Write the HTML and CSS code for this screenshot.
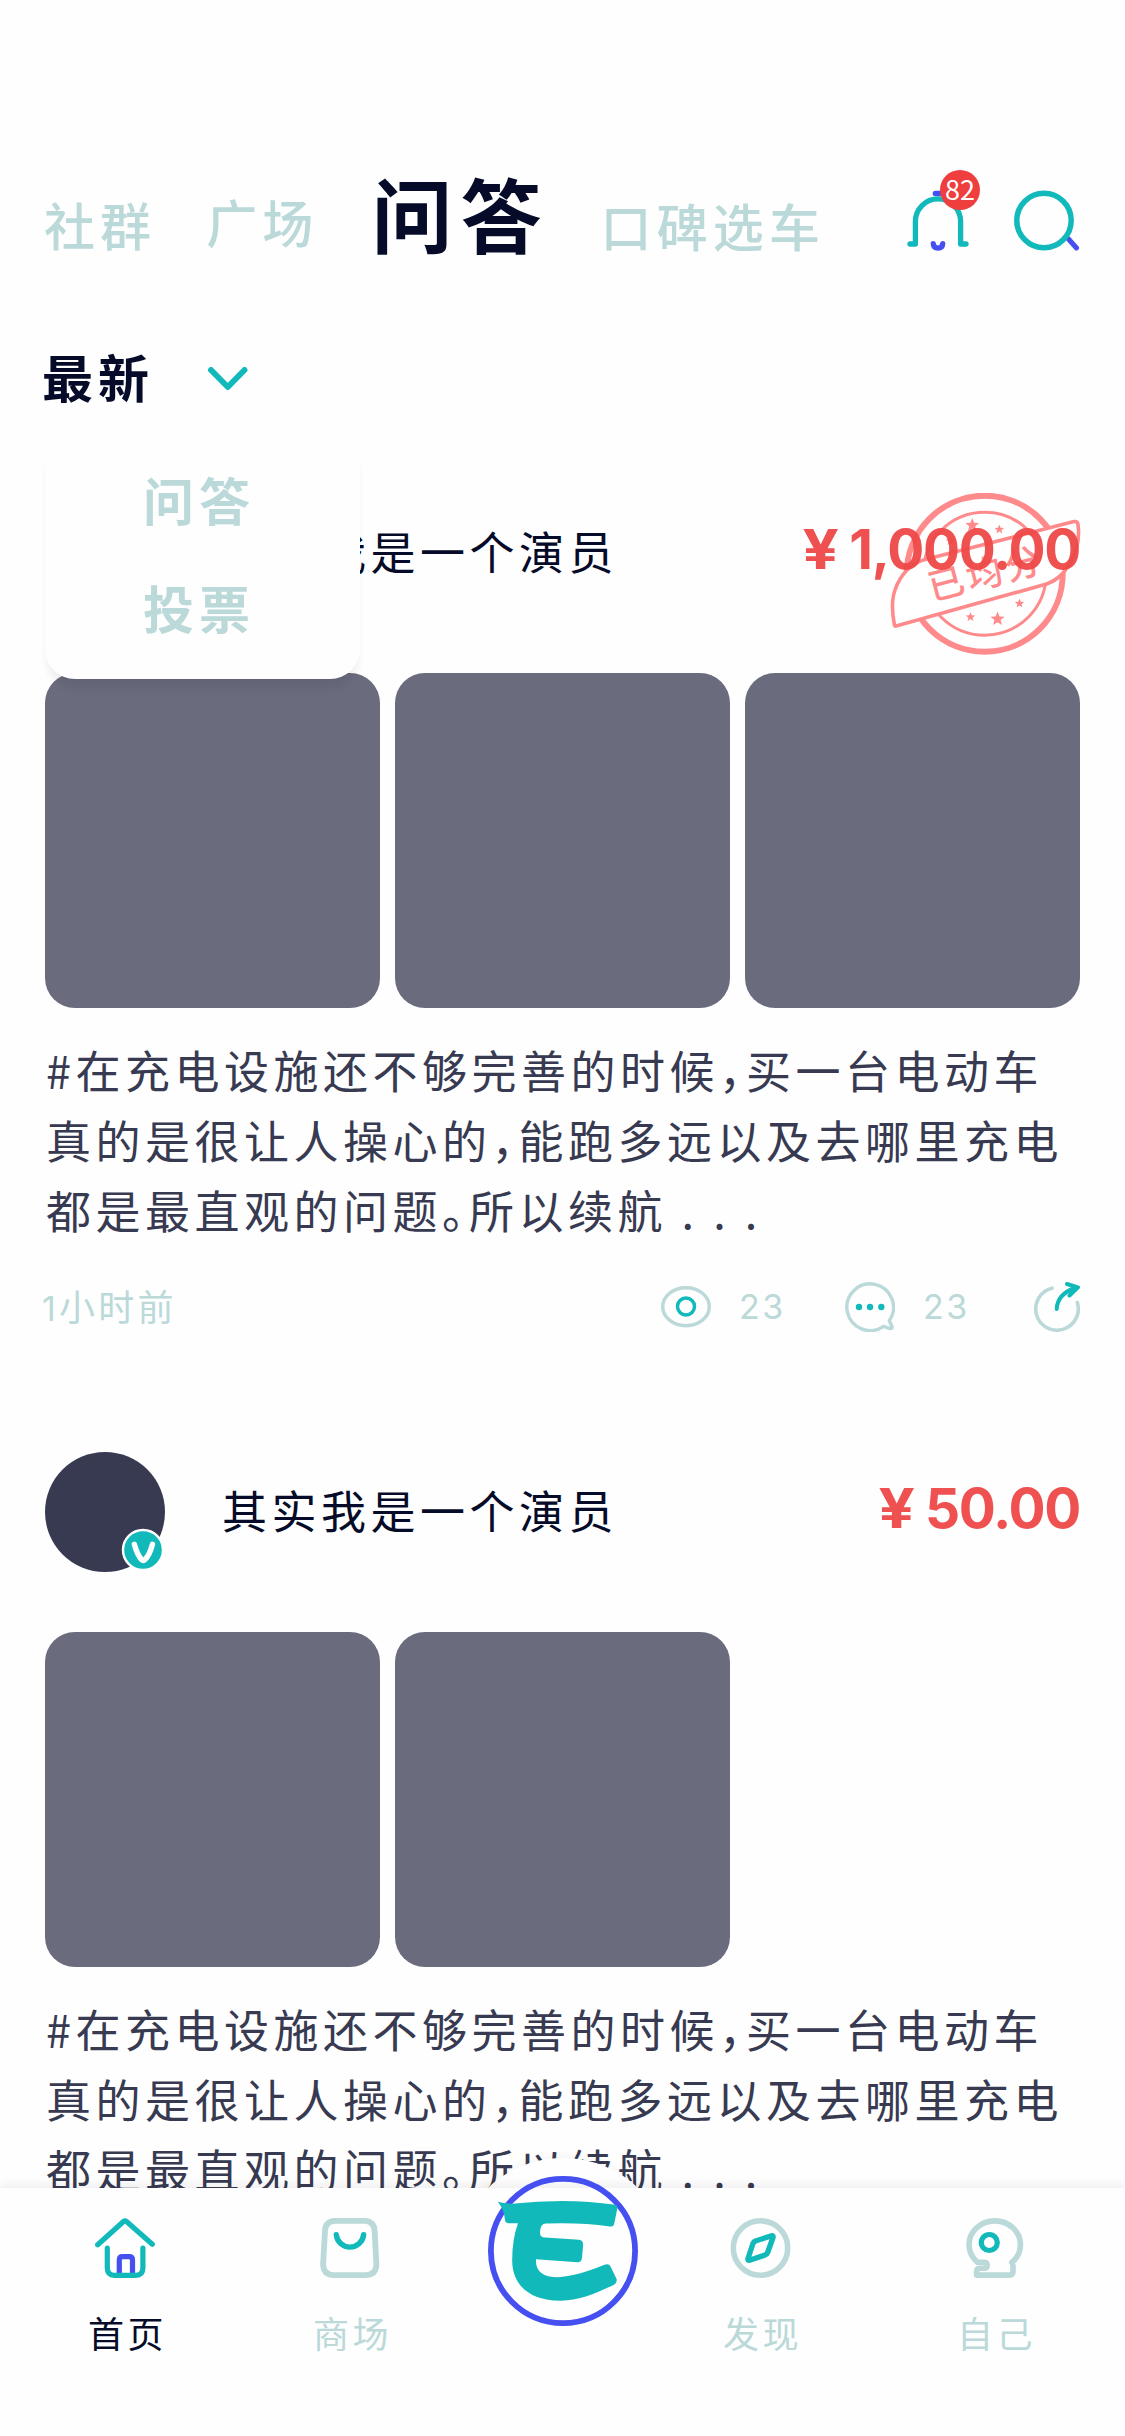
FILE: index.html
```html
<!DOCTYPE html>
<html lang="zh-CN">
<head>
<meta charset="utf-8">
<title>问答</title>
<link rel="stylesheet" href="styles.css">
</head>
<body>
<svg class="defs" width="0" height="0" aria-hidden="true">
  <symbol id="star" viewBox="-10 -10 20 20"><path d="M0-10 2.6-3.4 9.5-3.1 4.1 1.3 5.9 8.1 0 4.2-5.9 8.1-4.1 1.3-9.5-3.1-2.6-3.4z"/></symbol>
</svg>
<div class="screen">
  <header class="header">
    <nav class="tabs">
      <a class="tab tab-community">社群</a>
      <a class="tab tab-square">广场</a>
      <a class="tab tab-active">问答</a>
      <a class="tab tab-reviews">口碑选车</a>
    </nav>
    <div class="actions">
      <div class="bell">
        <svg width="62" height="68" viewBox="0 0 62 68" fill="none" stroke-width="5.3" stroke-linecap="round" stroke-linejoin="round">
          <path stroke="#4650f0" d="M28.300 8.500H37"/>
          <path stroke="#12b9bb" d="M3 59H8.400V36.500A22.600 22.600 0 0 1 53.600 36.500V59H59"/>
          <path stroke="#4650f0" d="M26.300 58.600Q26.500 63 31 63.100Q35.500 63 35.700 58.600"/>
        </svg>
        <span class="count">82</span>
      </div>
      <svg class="search" width="66" height="62" viewBox="0 0 66 62" fill="none" stroke-linecap="round">
        <path stroke="#4650f0" stroke-width="5" d="M54.500 49 62.500 58"/>
        <circle cx="30" cy="30.500" r="27.200" stroke="#12b9bb" stroke-width="5.500"/>
      </svg>
    </div>
  </header>

  <section class="filter">
    <span class="filter-label">最新</span>
    <svg class="chevron" width="40" height="24" viewBox="0 0 40 24" fill="none" stroke="#12b9bb" stroke-width="5.900" stroke-linecap="round" stroke-linejoin="round"><path d="M3 3 19.800 20 36.500 3"/></svg>
    <div class="menu">
      <a>问答</a>
      <a>投票</a>
    </div>
  </section>

  <main class="list">
    <article class="card">
      <div class="card-head">
        <div class="avatar"></div>
        <h2 class="name">其实我是一个演员</h2>
        <svg class="stamp" width="192" height="162" viewBox="0 0 192 162" fill="none" stroke="#ff8a8c">
          <circle cx="94.700" cy="80.700" r="78" stroke-width="6"/>
          <circle cx="94.700" cy="80.700" r="61.500" stroke-width="3"/>
          <path fill="#fff" stroke-width="3.600" stroke-linejoin="round" d="M4.500 132.500C2.500 122 1 108 5 97C10 82 21 69.500 37 66L184 28.600Q187.300 28 187.900 31C190 44 188 56 180 70C174 81 165 89 153 92L7 132.800Q5 133.500 4.500 132.500z"/>
          <g fill="#ff8a8c" stroke="none">
            <use href="#star" x="75" y="25" width="14.500" height="14.500"/>
            <use href="#star" x="104.300" y="31.500" width="10" height="10"/>
            <use href="#star" x="55.500" y="43" width="10" height="10"/>
            <use href="#star" x="75.500" y="119" width="10" height="10"/>
            <use href="#star" x="100" y="118.500" width="15" height="15"/>
            <use href="#star" x="124.500" y="105.500" width="10" height="10"/>
            <text class="stamp-text" transform="translate(42 108) rotate(-14.700)">已均分</text>
          </g>
        </svg>
        <div class="price"><span class="yen">¥</span>1,000.00</div>
      </div>
      <div class="photos"><div class="photo"></div><div class="photo"></div><div class="photo"></div></div>
      <p class="text">#在充电设施还不够完善的时候，买一台电动车<br>真的是很让人操心的，能跑多远以及去哪里充电<br>都是最直观的问题。所以续航 . . .</p>
      <footer class="meta">
        <span class="time"><span class="time-value">1</span>小时前</span>
        <svg class="eye" width="50" height="42" viewBox="0 0 50 42" fill="none"><ellipse cx="25" cy="20.700" rx="23.300" ry="19" stroke="#bad9d8" stroke-width="3.400"/><circle cx="25" cy="20.500" r="8.500" stroke="#12b9bb" stroke-width="3.500"/></svg>
        <span class="num">23</span>
        <svg class="comment" width="50" height="50" viewBox="0 0 50 50" fill="none"><path stroke="#bad9d8" stroke-width="3.400" stroke-linejoin="round" d="M38.500 44.300A23.300 23.300 0 1 1 44.300 38.500Q45.500 41.500 47 44.500Q47.500 47 45 46.500Q42 46 38.500 44.300z"/><g fill="#12b9bb"><circle cx="14" cy="25" r="3.200"/><circle cx="25" cy="25" r="3.200"/><circle cx="36.300" cy="25" r="3.200"/></g></svg>
        <span class="num">23</span>
        <svg class="share" width="46" height="50" viewBox="0 0 46 50" fill="none" stroke-linecap="round" stroke-linejoin="round"><path stroke="#bad9d8" stroke-width="3.600" d="M18 6.200A21.300 21.300 0 1 0 43.300 20.500"/><path stroke="#12b9bb" stroke-width="4" d="M22.700 27Q23.500 12 41 6M33 2 44 5.300 35.500 13.500"/></svg>
      </footer>
    </article>

    <article class="card">
      <div class="card-head">
        <div class="avatar">
          <svg class="verified" width="44" height="44" viewBox="0 0 44 44"><circle cx="22" cy="22" r="20" fill="#12b9bb" stroke="#fff" stroke-width="2.400"/><path fill="none" stroke="#fff" stroke-width="5.400" stroke-linecap="round" stroke-linejoin="round" d="M13.300 16.300Q16.500 27.500 20.500 31.500Q22.300 33.200 24 31.500Q28.500 27.500 31.500 16.300"/></svg>
        </div>
        <h2 class="name">其实我是一个演员</h2>
        <div class="price"><span class="yen">¥</span>50.00</div>
      </div>
      <div class="photos"><div class="photo"></div><div class="photo"></div></div>
      <p class="text">#在充电设施还不够完善的时候，买一台电动车<br>真的是很让人操心的，能跑多远以及去哪里充电<br>都是最直观的问题。所以续航 . . .</p>
    </article>
  </main>

  <nav class="bottom">
    <div class="bump"></div>
    <div class="bar">
      <a class="item item-home active">
        <svg width="60" height="60" viewBox="0 0 60 60" fill="none" stroke="#12b9bb" stroke-width="5.200" stroke-linecap="round" stroke-linejoin="round"><path stroke="#4650f0" stroke-linecap="butt" d="M24.300 55V42Q24.300 38.700 27.500 38.700H34.300Q37.500 38.700 37.500 42V55"/><path d="M2.700 26.800 28.500 3.500Q30 2.200 31.500 3.500L57.300 26.300M12.300 30V50Q12.300 57.300 19.500 57.300H40.700Q47.900 57.300 47.900 50V30"/></svg>
        <span>首页</span>
      </a>
      <a class="item item-mall">
        <svg width="60" height="60" viewBox="0 0 60 60" fill="none" stroke-linecap="round"><path stroke="#bad9d8" stroke-width="5.800" d="M15 2.900H44.500Q54.300 3.500 54.600 13L56.400 46Q56.300 57 45.500 57.100H14Q3.300 57 3.100 46L5 13Q5.200 3.500 15 2.900z"/><path stroke="#12b9bb" stroke-width="5.400" d="M16.300 16.800A13.700 13.500 0 0 0 43.600 16.800"/></svg>
        <span>商场</span>
      </a>
      <a class="item item-logo">
        <svg width="150" height="150" viewBox="0 0 150 150"><circle cx="75" cy="75" r="72.100" fill="none" stroke="#4650f0" stroke-width="5.800"/><path fill="#12b9bb" d="M9.800 25.700Q16 27.500 24 27.700Q50 25.200 74 25Q102 25 127 28.800Q129.800 29.200 129.300 32.500L126.200 48Q125.500 51 122 50.500Q92 46.200 57.500 47.600Q52 48 52 57Q52 61.300 57 61.500L91 63.700Q95.200 64.200 95.100 69L94 82Q93.200 86.600 89.500 86.300L48 83.200Q47 101 70 101.200Q88 100.500 116.500 88.800Q121 87 122.500 90.500L128.600 103Q129.500 106 126 108.800C104 119 91 124.300 73 124.700C44 125 24.500 111 24.200 85Q24 64 30 47.300H20.500Q17.300 47 17 44C16.500 37 14 31 9.800 25.700z"/></svg>
      </a>
      <a class="item item-discover">
        <svg width="61" height="60" viewBox="0 0 61 60" fill="none" stroke-linejoin="round"><circle cx="30.500" cy="30" r="27.200" stroke="#bad9d8" stroke-width="5.600"/><path stroke="#12b9bb" stroke-width="5.400" d="M41.500 17.800Q43.500 17.500 43 19.500L37.800 34Q37 36.300 35 37L19.500 42.300Q17.500 42.500 18 40.500L23 25.500Q23.700 23.800 25.500 23z"/></svg>
        <span>发现</span>
      </a>
      <a class="item item-me">
        <svg width="58" height="60" viewBox="0 0 58 60" fill="none" stroke-linecap="round" stroke-linejoin="round"><path stroke="#bad9d8" stroke-width="5.600" d="M45.800 44.500A25.700 23.800 0 1 0 11.500 44.300H18Q21.200 44.300 21.200 47.300T18 50.300H14Q10.600 50.500 10.600 53.500V57.100H43.500Q47 57 47 53.500V48"/><circle cx="23.300" cy="24.500" r="8" stroke="#12b9bb" stroke-width="5.200"/></svg>
        <span>自己</span>
      </a>
    </div>
  </nav>
</div>
</body>
</html>
```
FILE: styles.css
```css
* { box-sizing: border-box; }

body {
  margin: 0;
  background: #fefefe;
  color: #050b28;
  font-family: "Noto Sans CJK SC", sans-serif;
}

.defs { position: absolute; }

svg { display: block; flex: none; }

.screen {
  position: relative;
  width: 1125px;
  height: 2436px;
  overflow: hidden;
}

/* Header */
.header {
  display: flex;
  height: 265px;
}

.tabs {
  display: flex;
  align-items: flex-start;
  flex: 1;
  padding: 167px 0 0 44px;
}

.tab {
  color: #bad9d8;
  font-size: 51px;
  font-weight: 500;
  line-height: 60px;
  letter-spacing: 5.1px;
  white-space: nowrap;
}

.tab-community { margin-top: 27px; }
.tab-square { margin: 24px 0 0 50px; }
.tab-reviews { margin: 28px 0 0 51px; }

.tab-active {
  margin-left: 53px;
  color: #050b28;
  font-size: 81px;
  font-weight: 700;
  line-height: 90px;
  letter-spacing: 8.1px;
}

.actions {
  display: flex;
  gap: 45px;
  padding: 185px 45px 0 0;
}

.bell { position: relative; }

.count {
  position: absolute;
  top: -15px;
  left: 33px;
  width: 40px;
  height: 40px;
  border-radius: 50%;
  background: #ee3e3e;
  color: #fff;
  font-size: 27px;
  line-height: 37px;
  text-align: center;
}

.search { margin-top: 5px; }

/* Sort filter and its dropdown */
.filter {
  position: relative;
  display: flex;
  align-items: flex-start;
  height: 190px;
  padding: 81px 0 0 42px;
}

.filter-label {
  font-size: 51px;
  font-weight: 700;
  line-height: 60px;
  letter-spacing: 5.1px;
}

.chevron { margin: 21px 0 0 54px; }

.menu {
  position: absolute;
  top: 190px;
  left: 45px;
  z-index: 2;
  display: flex;
  flex-direction: column;
  align-items: flex-start;
  gap: 48px;
  width: 315px;
  height: 224px;
  padding: 14px 0 0 98px;
  border-radius: 0 0 30px 30px;
  background: #fefefe;
  box-shadow: 0 9px 9px -3px rgba(5, 11, 40, .060), 0 12px 9px rgba(5, 11, 40, .020);
  color: #bad9d8;
  font-size: 51px;
  font-weight: 700;
  line-height: 60px;
  letter-spacing: 5.1px;
}

/* Question cards */
.list { padding: 38px 45px 0; }

.card { height: 959px; }

.card-head {
  position: relative;
  display: flex;
  align-items: center;
  height: 120px;
}

.avatar {
  position: relative;
  width: 120px;
  height: 120px;
  border-radius: 50%;
  background: #373a51;
}

.verified {
  position: absolute;
  top: 76px;
  left: 76px;
}

.name {
  flex: 1;
  margin: 0 0 4px 57px;
  font-size: 45px;
  font-weight: 400;
  line-height: 66px;
  letter-spacing: 4.500px;
}

.stamp {
  position: absolute;
  top: 0;
  right: -2px;
}

.price {
  position: relative;
  margin-bottom: 8px;
  color: rgba(238, 72, 72, .950);
  font-family: Inter, sans-serif;
  font-size: 55px;
  font-weight: 700;
  line-height: 66px;
  letter-spacing: -1.300px;
  white-space: nowrap;
}

.yen {
  display: inline-block;
  margin-right: 14px;
  transform: scaleX(1.160);
}

.stamp-text {
  font-size: 36px;
  font-weight: 500;
  letter-spacing: 3.600px;
}

.photos {
  display: grid;
  grid-template-columns: repeat(3, 335px);
  gap: 15px;
  margin-top: 60px;
}

.photo {
  height: 335px;
  border-radius: 30px;
  background: #6a6c7e;
}

.text {
  margin: 27px 0 0 1px;
  color: #373a51;
  font-size: 45px;
  line-height: 70px;
  letter-spacing: 4.500px;
  font-feature-settings: "halt";
  white-space: nowrap;
}

.meta {
  display: flex;
  align-items: center;
  height: 50px;
  margin-top: 37px;
  color: #bad9d8;
  font-family: Inter, "Noto Sans CJK SC", sans-serif;
  font-size: 34px;
  letter-spacing: 2.500px;
}

.time {
  flex: 1;
  margin: -4px 0 0 -3px;
  font-size: 36px;
  letter-spacing: 3.200px;
}

.time-value { font-size: 34px; }

.num {
  width: 45px;
  margin: -2px 0 0 28px;
}

.comment { margin-left: 61px; }
.share { margin-left: 66px; }

/* Bottom navigation */
.bottom {
  position: absolute;
  right: 0;
  bottom: 0;
  left: 0;
  z-index: 3;
  height: 248px;
}

.bump {
  position: absolute;
  top: -30px;
  left: 454px;
  width: 218px;
  height: 218px;
  border-radius: 50%;
  background: #fefefe;
  box-shadow: 0 0 12px rgba(5, 11, 40, .060);
}

.bar {
  position: relative;
  display: flex;
  align-items: flex-start;
  height: 248px;
  padding-left: 50px;
  background: #fefefe;
  box-shadow: 0 -5px 8px rgba(5, 11, 40, .050);
}

.item {
  display: flex;
  flex-direction: column;
  align-items: center;
  width: 150px;
  padding-top: 30px;
  color: #bad9d8;
  font-size: 36px;
  line-height: 50px;
  letter-spacing: 3.600px;
}

.item span { margin: 29px 0 0 5px; }
.active { color: #050b28; }
.item-mall { margin-left: 75px; }
.item-logo { margin: -12px 0 0 63px; padding: 0; }
.item-discover { margin-left: 47px; }
.item-me { margin-left: 85px; }
.item-me span { margin-left: 3px; }
```
